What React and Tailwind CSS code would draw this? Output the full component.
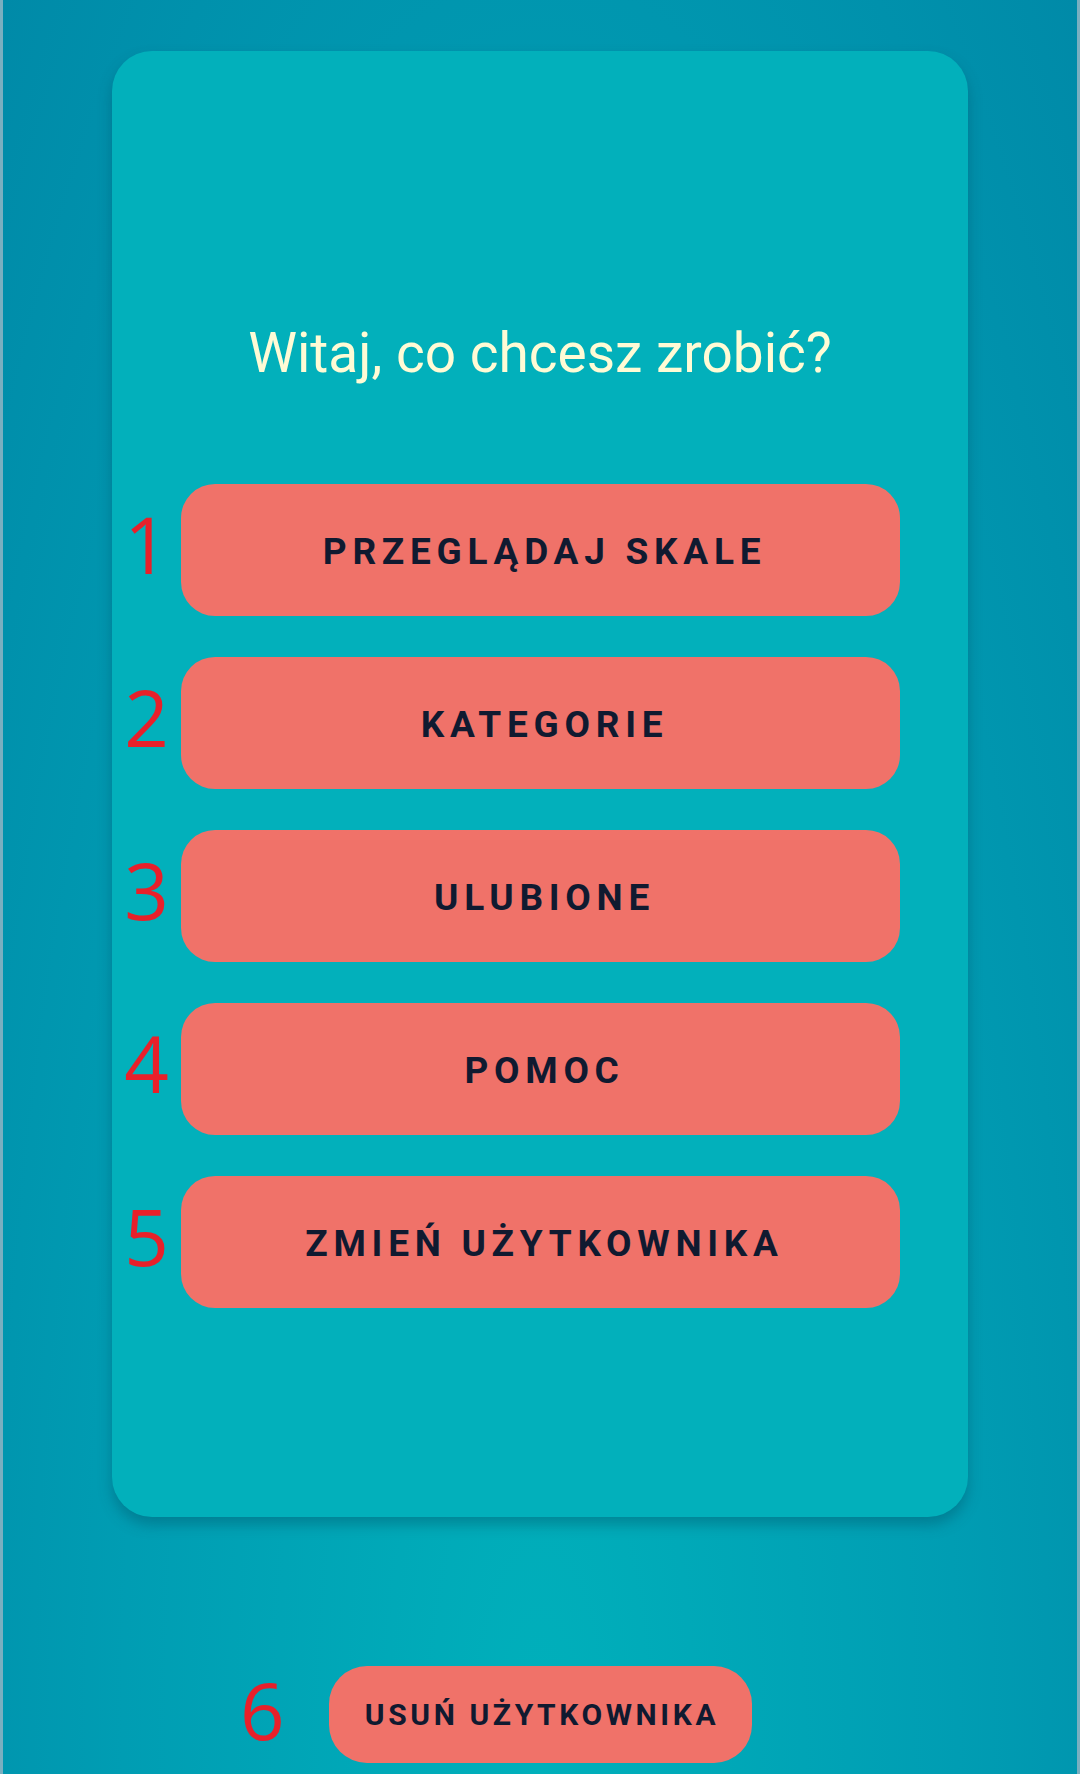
import React from 'react';

const MENU = [
    { n: '1', label: 'PRZEGLĄDAJ SKALE' },
    { n: '2', label: 'KATEGORIE' },
    { n: '3', label: 'ULUBIONE' },
    { n: '4', label: 'POMOC' },
    { n: '5', label: 'ZMIEŃ UŻYTKOWNIKA' },
];

const roboto = { fontFamily: 'Roboto, "Liberation Sans", sans-serif' };
const digitFont = { fontFamily: '"Open Sans", "Noto Sans", sans-serif' };

function MenuRow({ n, label }) {
    return (
        <div className="flex items-center">
            {/* numer porządkowy */}
            <span className="w-[69px] -mt-[12px] text-center text-[78px] leading-none text-[#e8202a]" style={digitFont}>
                {n}
            </span>
            <button className="flex-1 h-[132px] pt-[4px] pl-[8px] rounded-[34px] bg-[#f07269] text-[#101a30] text-[37px] font-bold tracking-[0.155em]"
                style={roboto}>
                {label}
            </button>
            <span className="w-[68px]" />
        </div>
    );
}

export default function App() {
    return (
        <div className="min-h-[1774px] w-full border-x-[3px] border-[#7aafc0] bg-[radial-gradient(ellipse_at_50%_100%,#00b0bb_0%,#009db3_55%,#008aa8_100%)] flex flex-col items-center pt-[51px]">
            <div className="w-[856px] rounded-[40px] bg-[#02b0bb] shadow-[0_8px_14px_rgba(0,70,90,0.35)] pt-[269px] pb-[209px] flex flex-col">
                <h1 className="text-center text-[55px] leading-[66px] text-[#fffbd5] font-normal" style={roboto}>
                    Witaj, co chcesz zrobić?
                </h1>
                <div className="mt-[98px] flex flex-col gap-[41px]">
                    {MENU.map(m => <MenuRow key={m.n} {...m} />)}
                </div>
            </div>

            <div className="relative mt-[149px]">
                <span className="absolute right-[calc(100%+44px)] top-1/2 -translate-y-[56%] text-[78px] leading-none text-[#e8202a]" style={digitFont}>
                    6
                </span>
                <button className="w-[423px] h-[97px] pl-[4px] rounded-[38px] bg-[#f07269] text-[#101a30] text-[30px] font-bold tracking-[0.12em]"
                    style={roboto}>
                    USUŃ UŻYTKOWNIKA
                </button>
            </div>
        </div>
    );
}
